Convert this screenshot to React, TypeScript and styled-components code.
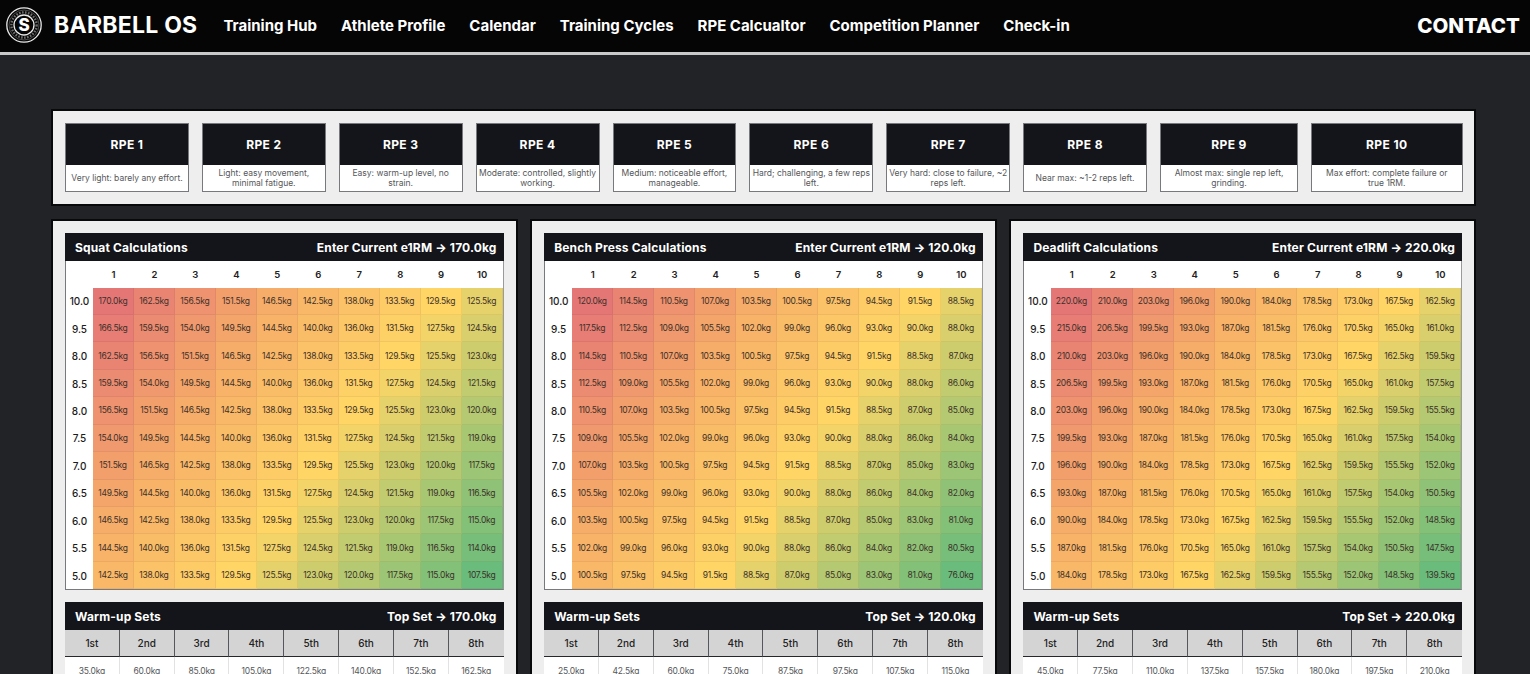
import { Fragment } from "react";
import styled, { createGlobalStyle } from "styled-components";

const GlobalStyle = createGlobalStyle`
  html, body {
    margin: 0;
    height: 100%;
    overflow: hidden;
    background: #212327;
  }
  * { box-sizing: border-box; }
  body { font-family: "Inter", "Liberation Sans", sans-serif; }
`;

const Header = styled.header`
  height: 55px;
  background: #050505;
  border-bottom: 3px solid #c9c9c9;
  display: flex;
  align-items: center;
  padding: 0 10px 2px 6px;
  color: #fff;
`;

const Brand = styled.div`
  font-size: 23px;
  font-weight: 700;
  letter-spacing: 0.25px;
  margin-left: 12px;
  white-space: nowrap;
`;

const Nav = styled.nav`
  display: flex;
  gap: 24px;
  margin-left: 26px;
  font-size: 15px;
  font-weight: 700;
  white-space: nowrap;
`;

const Contact = styled.div`
  margin-left: auto;
  font-size: 20.5px;
  font-weight: 800;
`;

const Main = styled.main`
  padding: 54px 54px 0 51px;
  display: flex;
  flex-direction: column;
  gap: 13px;
`;

const Panel = styled.section`
  background: #eeeeee;
  border: 2px solid #08090b;
  padding: 12px;
`;

const RpeRow = styled.div`
  display: grid;
  grid-template-columns: repeat(8, 123.875px) 138px 151.5px;
  gap: 13px;
`;

const RpeCard = styled.div`
  height: 69px;
  display: flex;
  flex-direction: column;
  background: #fff;
  border: 1px solid #77797c;
`;

const RpeTitle = styled.div`
  height: 41px;
  background: #14151a;
  color: #fff;
  font-size: 12px;
  font-weight: 700;
  letter-spacing: 0.4px;
  display: flex;
  align-items: center;
  justify-content: center;
`;

const RpeText = styled.div`
  flex: 1;
  display: flex;
  align-items: center;
  justify-content: center;
  text-align: center;
  padding: 1px 1px 0;
  font-size: 8.5px;
  line-height: 9.5px;
  color: #55575a;
`;

const Columns = styled.div`
  display: grid;
  grid-template-columns: repeat(3, 1fr);
  gap: 12.6px;
`;

const Bar = styled.div`
  height: 28px;
  background: #14151a;
  color: #fff;
  display: flex;
  align-items: center;
  justify-content: space-between;
  padding: 0 7px 0 10px;
  font-size: 12px;
  font-weight: 700;
  letter-spacing: 0.15px;
  white-space: nowrap;
`;

const Heat = styled.div`
  display: grid;
  grid-template-columns: 27px repeat(10, 1fr);
  grid-template-rows: 26.5px repeat(11, 27.45px);
  background: #fff;
  border-left: 1px solid #77797c;
  border-right: 1px solid #9a9a9a;
  border-bottom: 1px solid #77797c;
  margin-bottom: 12px;
`;

const Cell = styled.div`
  display: flex;
  align-items: center;
  justify-content: center;
`;

const ColLabel = styled(Cell)`
  font-size: 9.5px;
  font-weight: 600;
  color: #222;
`;

const RowLabel = styled(Cell)`
  font-size: 10px;
  font-weight: 500;
  color: #1c1c1c;
`;

const HeatCell = styled(Cell)<{ $bg: string }>`
  background: ${(props) => props.$bg};
  border-right: 1px solid rgba(0, 0, 0, 0.05);
  border-bottom: 1px solid rgba(0, 0, 0, 0.05);
  font-size: 8.5px;
  letter-spacing: -0.25px;
  color: #3d312a;
`;

const SetGrid = styled.div`
  display: grid;
  grid-template-columns: repeat(8, 1fr);
  background: #fff;
`;

const SetHead = styled(Cell)`
  height: 27px;
  background: #d4d4d4;
  border-right: 1px solid #55575a;
  border-bottom: 1px solid #26272a;
  font-size: 10px;
  font-weight: 500;
  color: #222;
  &:nth-child(8) {
    border-right: none;
  }
`;

const SetValue = styled(Cell)`
  height: 27px;
  border-right: 1px solid #e2e2e2;
  font-size: 8.5px;
  letter-spacing: -0.2px;
  color: #55575a;
  &:last-child {
    border-right: none;
  }
`;

const rpeInfo = [
  "Very light: barely any effort.",
  "Light: easy movement, minimal fatigue.",
  "Easy: warm-up level, no strain.",
  "Moderate: controlled, slightly working.",
  "Medium: noticeable effort, manageable.",
  "Hard; challenging, a few reps left.",
  "Very hard: close to failure, ~2 reps left.",
  "Near max: ~1-2 reps left.",
  "Almost max: single rep left, grinding.",
  "Max effort: complete failure or true\u00a01RM.",
];

const navLinks = [
  "Training Hub",
  "Athlete Profile",
  "Calendar",
  "Training Cycles",
  "RPE Calcualtor",
  "Competition Planner",
  "Check-in",
];

const rowLabels = ["10.0", "9.5", "8.0", "8.5", "8.0", "7.5", "7.0", "6.5", "6.0", "5.5", "5.0"];
const setLabels = ["1st", "2nd", "3rd", "4th", "5th", "6th", "7th", "8th"];

// every cell is one step along the lift's list: row + 2 * column
const lifts = [
  {
    name: "Squat",
    max: "170.0",
    steps: [170, 166.5, 162.5, 159.5, 156.5, 154, 151.5, 149.5, 146.5, 144.5, 142.5, 140, 138, 136, 133.5, 131.5, 129.5, 127.5, 125.5, 124.5, 123, 121.5, 120, 119, 117.5, 116.5, 115, 114, 107.5],
    sets: [35, 60, 85, 105, 122.5, 140, 152.5, 162.5],
  },
  {
    name: "Bench Press",
    max: "120.0",
    steps: [120, 117.5, 114.5, 112.5, 110.5, 109, 107, 105.5, 103.5, 102, 100.5, 99, 97.5, 96, 94.5, 93, 91.5, 90, 88.5, 88, 87, 86, 85, 84, 83, 82, 81, 80.5, 76],
    sets: [25, 42.5, 60, 75, 87.5, 97.5, 107.5, 115],
  },
  {
    name: "Deadlift",
    max: "220.0",
    steps: [220, 215, 210, 206.5, 203, 199.5, 196, 193, 190, 187, 184, 181.5, 178.5, 176, 173, 170.5, 167.5, 165, 162.5, 161, 159.5, 157.5, 155.5, 154, 152, 150.5, 148.5, 147.5, 139.5],
    sets: [45, 77.5, 110, 137.5, 157.5, 180, 197.5, 210],
  },
];

const stops: [number, number[]][] = [
  [0, [229, 118, 118]],
  [0.3, [247, 176, 104]],
  [0.57, [255, 214, 102]],
  [1, [106, 188, 124]],
];

function heatColor(t: number) {
  for (let i = 1; i < stops.length; i++) {
    const [pos, color] = stops[i];
    const [prevPos, prev] = stops[i - 1];
    if (t <= pos) {
      const k = (t - prevPos) / (pos - prevPos);
      const rgb = prev.map((v, n) => Math.round(v + (color[n] - v) * k));
      return `rgb(${rgb.join(",")})`;
    }
  }
  return "rgb(106,188,124)";
}

function Logo() {
  return (
    <svg width="36" height="36" viewBox="0 0 36 36">
      <circle cx="18" cy="18" r="17.2" fill="none" stroke="#e8e8e8" strokeWidth="1.3" />
      <circle cx="18" cy="18" r="15" fill="none" stroke="#777" strokeWidth="0.6" />
      <circle cx="18" cy="18" r="12.6" fill="none" stroke="#6e6e6e" strokeWidth="2.4" strokeDasharray="1.6 1.4" />
      <circle cx="18" cy="18" r="10" fill="#050505" stroke="#e8e8e8" strokeWidth="1.3" />
      <text x="18" y="24" textAnchor="middle" fontSize="17" fontWeight="800" fill="#fff" fontFamily="Inter, sans-serif">
        S
      </text>
    </svg>
  );
}

export default function App() {
  return (
    <>
      <GlobalStyle />
      <Header>
        <Logo />
        <Brand>BARBELL OS</Brand>
        <Nav>
          {navLinks.map((link) => (
            <span key={link}>{link}</span>
          ))}
        </Nav>
        <Contact>CONTACT</Contact>
      </Header>
      <Main>
        <Panel>
          <RpeRow>
            {rpeInfo.map((text, i) => (
              <RpeCard key={i}>
                <RpeTitle>RPE {i + 1}</RpeTitle>
                <RpeText>{text}</RpeText>
              </RpeCard>
            ))}
          </RpeRow>
        </Panel>
        <Columns>
          {lifts.map((lift) => (
            <Panel key={lift.name}>
              <Bar>
                <span>{lift.name} Calculations</span>
                <span>Enter Current e1RM → {lift.max}kg</span>
              </Bar>
              <Heat>
                <Cell />
                {Array.from({ length: 10 }, (_, c) => (
                  <ColLabel key={c}>{c + 1}</ColLabel>
                ))}
                {rowLabels.map((label, r) => (
                  <Fragment key={r}>
                    <RowLabel>{label}</RowLabel>
                    {Array.from({ length: 10 }, (_, c) => (
                      <HeatCell key={c} $bg={heatColor((r + 2 * c) / 28)}>
                        {lift.steps[r + 2 * c].toFixed(1)}kg
                      </HeatCell>
                    ))}
                  </Fragment>
                ))}
              </Heat>
              <Bar>
                <span>Warm-up Sets</span>
                <span>Top Set → {lift.max}kg</span>
              </Bar>
              <SetGrid>
                {setLabels.map((label) => (
                  <SetHead key={label}>{label}</SetHead>
                ))}
                {lift.sets.map((value, i) => (
                  <SetValue key={i}>{value.toFixed(1)}kg</SetValue>
                ))}
              </SetGrid>
            </Panel>
          ))}
        </Columns>
      </Main>
    </>
  );
}
